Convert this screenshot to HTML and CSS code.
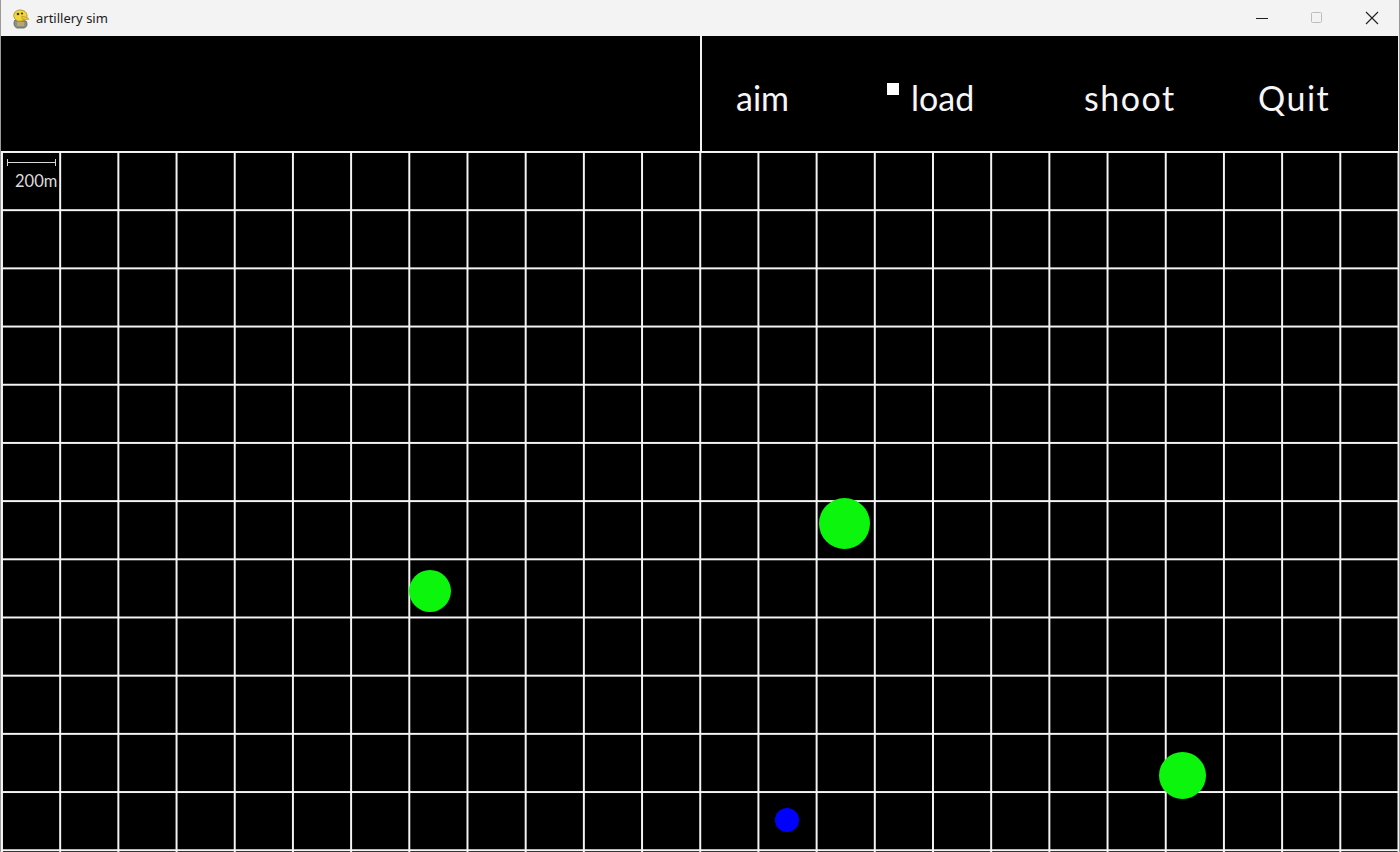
FILE: index.html
```html
<!DOCTYPE html>
<html lang="en">
<head>
<meta charset="utf-8">
<title>artillery sim</title>
<link rel="stylesheet" href="styles.css">
</head>
<body>
<div class="window">
  <div class="titlebar">
    <svg class="app-icon" width="20" height="22" viewBox="0 0 20 22" aria-hidden="true">
      <path d="M4 12 C2 15 3 19 6 20 L13 20 C16 19 17 16 15 13 Z" fill="#8a8f8a" stroke="#5e5f55" stroke-width="0.8"/>
      <path d="M6 14 L13 14 L13 18 L6 18 Z" fill="#b9a86a"/>
      <path d="M3 9 C2 5 5 2 9 2 C13 2 16 4 16 8 C16 11 13 13 10 13 C7 14 4 12 3 9 Z" fill="#f3d53b" stroke="#a0892a" stroke-width="0.8"/>
      <path d="M11 8 C13 9 16 9 18 11 C16 12 13 12 11 11 Z" fill="#f0c92e" stroke="#a0892a" stroke-width="0.6"/>
      <circle cx="7" cy="6" r="1.3" fill="#3a3a2a"/>
      <circle cx="11" cy="5.5" r="1.1" fill="#3a3a2a"/>
    </svg>
    <span class="title">artillery sim</span>
    <div class="controls">
      <div class="ctl">
        <svg width="14" height="14" viewBox="0 0 14 14"><path d="M1 7.5 H13" stroke="#1f1f1f" stroke-width="1"/></svg>
      </div>
      <div class="ctl">
        <svg width="14" height="14" viewBox="0 0 14 14"><rect x="1.5" y="1.5" width="10" height="10" rx="1" fill="none" stroke="#bdbdbd" stroke-width="1"/></svg>
      </div>
      <div class="ctl">
        <svg width="14" height="14" viewBox="0 0 14 14"><path d="M1 1 L13 13 M13 1 L1 13" stroke="#1f1f1f" stroke-width="1.1"/></svg>
      </div>
    </div>
  </div>
  <div class="game">
    <div class="hud">
      <div class="hud-left"></div>
      <div class="hud-right">
        <div class="btn">aim</div>
        <div class="btn load"><span class="marker"></span>load</div>
        <div class="btn wide">shoot</div>
        <div class="btn wide">Quit</div>
      </div>
    </div>
    <div class="field">
      <div class="scale">
        <div class="scale-bar"></div>
        <div class="scale-label">200m</div>
      </div>
      <div class="dot target" style="left:408px; top:419px; width:42px; height:42px;"></div>
      <div class="dot target" style="left:818px; top:347px; width:51px; height:51px;"></div>
      <div class="dot target" style="left:1158px; top:601px; width:47px; height:47px;"></div>
      <div class="dot gun" style="left:774px; top:657px; width:24px; height:24px;"></div>
    </div>
  </div>
</div>
</body>
</html>
```

FILE: styles.css
```css
* { box-sizing: border-box; }

html, body {
  margin: 0;
  padding: 0;
  width: 1400px;
  height: 852px;
  overflow: hidden;
  background: #f3f3f3;
}

.window {
  width: 1400px;
  height: 852px;
  display: flex;
  flex-direction: column;
  background: #f3f3f3;
  border-left: 1px solid #9a9a9a;
  border-right: 1px solid #9a9a9a;
}

.titlebar {
  height: 36px;
  flex: none;
  display: flex;
  align-items: center;
  padding-left: 10px;
  font-family: "Noto Sans", "Segoe UI", sans-serif;
}

.app-icon {
  flex: none;
  margin-top: 1px;
}

.title {
  margin-left: 5px;
  font-size: 13px;
  color: #1a1a1a;
  line-height: 1;
  margin-top: 1px;
}

.controls {
  margin-left: auto;
  display: flex;
  height: 36px;
}

.ctl {
  width: 55px;
  height: 36px;
  display: flex;
  align-items: center;
  justify-content: center;
}

.game {
  flex: 1;
  display: flex;
  flex-direction: column;
  background: #000;
  width: 1397px;
}

.hud {
  height: 115px;
  flex: none;
  display: flex;
}

.hud-left {
  width: 701px;
  flex: none;
  border-right: 2px solid #f2f2f2;
}

.hud-right {
  flex: 1;
  display: grid;
  grid-template-columns: repeat(4, 174px);
  padding-top: 42px;
}

.btn {
  display: flex;
  align-items: flex-start;
  padding-left: 34px;
  font-family: "Lato", "Noto Sans", sans-serif;
  font-size: 34px;
  line-height: 40px;
  color: #f6f6f6;
}

.btn.wide {
  letter-spacing: 1.5px;
}

.btn.load {
  padding-left: 11px;
  gap: 12px;
}

.marker {
  width: 12px;
  height: 12px;
  background: #fff;
  margin-top: 5px;
  flex: none;
}

.field {
  flex: 1;
  position: relative;
  background-color: #000;
  background-image:
    linear-gradient(to right, #f4f4f4 2px, transparent 2px),
    linear-gradient(to bottom, #f4f4f4 2px, transparent 2px);
  background-size: 58.2px 58.2px;
  background-position: 0 0;
  overflow: hidden;
}

.scale {
  position: absolute;
  left: 6px;
  top: 8px;
}

.scale-bar {
  width: 49px;
  height: 7px;
  border-left: 1px solid #d8d8d8;
  border-right: 1px solid #d8d8d8;
  background: linear-gradient(to bottom, transparent 3px, #d8d8d8 3px, #d8d8d8 4px, transparent 4px);
}

.scale-label {
  margin-top: 5px;
  margin-left: 8px;
  font-family: "Lato", "Noto Sans", sans-serif;
  font-size: 16.5px;
  line-height: 20px;
  color: #dcdcdc;
}

.dot {
  position: absolute;
  border-radius: 50%;
}

.dot.target { background: #0cf50c; }
.dot.gun { background: #0000ff; }
```
